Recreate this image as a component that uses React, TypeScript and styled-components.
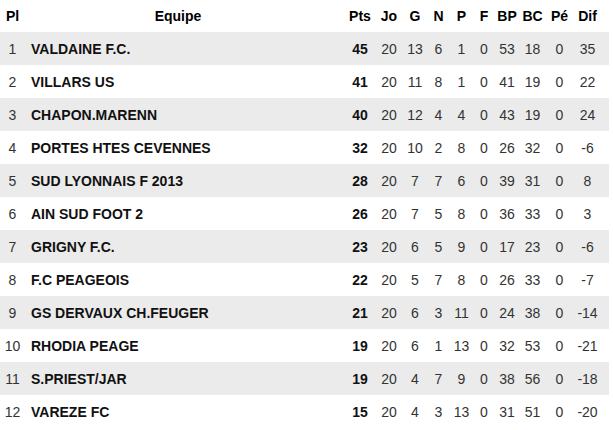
import React from 'react';
import styled, { createGlobalStyle } from 'styled-components';

const GlobalStyle = createGlobalStyle`
  body {
    margin: 0;
    background: #fff;
    font-family: "Liberation Sans", Arial, sans-serif;
  }
`;

type Team = {
  name: string;
  pts: number;
  stats: number[];
};

const teams: Team[] = [
  { name: 'VALDAINE F.C.', pts: 45, stats: [20, 13, 6, 1, 0, 53, 18, 0, 35] },
  { name: 'VILLARS US', pts: 41, stats: [20, 11, 8, 1, 0, 41, 19, 0, 22] },
  { name: 'CHAPON.MARENN', pts: 40, stats: [20, 12, 4, 4, 0, 43, 19, 0, 24] },
  { name: 'PORTES HTES CEVENNES', pts: 32, stats: [20, 10, 2, 8, 0, 26, 32, 0, -6] },
  { name: 'SUD LYONNAIS F 2013', pts: 28, stats: [20, 7, 7, 6, 0, 39, 31, 0, 8] },
  { name: 'AIN SUD FOOT 2', pts: 26, stats: [20, 7, 5, 8, 0, 36, 33, 0, 3] },
  { name: 'GRIGNY F.C.', pts: 23, stats: [20, 6, 5, 9, 0, 17, 23, 0, -6] },
  { name: 'F.C PEAGEOIS', pts: 22, stats: [20, 5, 7, 8, 0, 26, 33, 0, -7] },
  { name: 'GS DERVAUX CH.FEUGER', pts: 21, stats: [20, 6, 3, 11, 0, 24, 38, 0, -14] },
  { name: 'RHODIA PEAGE', pts: 19, stats: [20, 6, 1, 13, 0, 32, 53, 0, -21] },
  { name: 'S.PRIEST/JAR', pts: 19, stats: [20, 4, 7, 9, 0, 38, 56, 0, -18] },
  { name: 'VAREZE FC', pts: 15, stats: [20, 4, 3, 13, 0, 31, 51, 0, -20] },
];

const statHeaders = ['Jo', 'G', 'N', 'P', 'F', 'BP', 'BC', 'Pé', 'Dif'];

const Table = styled.div`
  width: 609px;
  font-size: 14px;
`;

const Row = styled.div<{ $striped?: boolean; $head?: boolean }>`
  display: grid;
  grid-template-columns: 25px 320px 30px 28px 24px 23px 23px 22px 24px 27px 27px 29px;
  align-items: center;
  height: ${(p) => (p.$head ? '32px' : '33px')};
  background: ${(p) => (p.$striped ? '#ebebeb' : '#fff')};
`;

const HeadCell = styled.div<{ $pad?: number }>`
  text-align: center;
  font-weight: bold;
  color: #000;
  padding-right: ${(p) => p.$pad ?? 0}px;
  white-space: nowrap;
`;

const RankCell = styled.div`
  text-align: center;
  color: #333;
`;

const TeamCell = styled.div`
  padding-left: 6px;
  font-weight: bold;
  color: #111;
  white-space: nowrap;
`;

const StatCell = styled.div<{ $bold?: boolean }>`
  text-align: center;
  white-space: nowrap;
  color: ${(p) => (p.$bold ? '#111' : '#333')};
  font-weight: ${(p) => (p.$bold ? 'bold' : 'normal')};
`;

const App: React.FC = () => {
  return (
    <>
      <GlobalStyle />
      <Table>
        <Row $head>
          <HeadCell>Pl</HeadCell>
          <HeadCell $pad={14}>Equipe</HeadCell>
          <HeadCell>Pts</HeadCell>
          {statHeaders.map((h) => (
            <HeadCell key={h}>{h}</HeadCell>
          ))}
        </Row>
        {teams.map((t, i) => (
          <Row key={t.name} $striped={i % 2 === 0}>
            <RankCell>{i + 1}</RankCell>
            <TeamCell>{t.name}</TeamCell>
            <StatCell $bold>{t.pts}</StatCell>
            {t.stats.map((s, j) => (
              <StatCell key={j}>{s}</StatCell>
            ))}
          </Row>
        ))}
      </Table>
    </>
  );
};

export default App;
